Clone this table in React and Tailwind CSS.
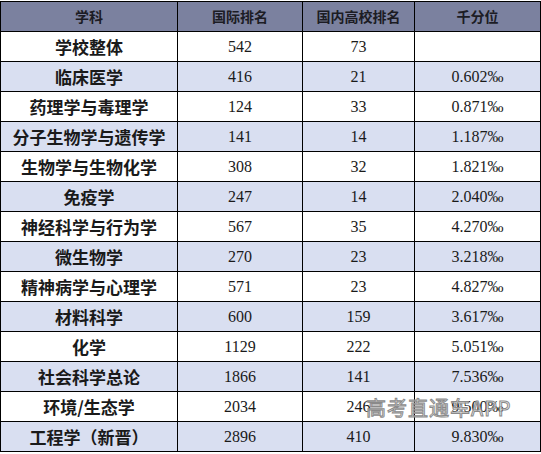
import React from "react";

const rows = [
  { name: "学校整体", intl: "542", home: "73", rate: "" },
  { name: "临床医学", intl: "416", home: "21", rate: "0.602‰" },
  { name: "药理学与毒理学", intl: "124", home: "33", rate: "0.871‰" },
  { name: "分子生物学与遗传学", intl: "141", home: "14", rate: "1.187‰" },
  { name: "生物学与生物化学", intl: "308", home: "32", rate: "1.821‰" },
  { name: "免疫学", intl: "247", home: "14", rate: "2.040‰" },
  { name: "神经科学与行为学", intl: "567", home: "35", rate: "4.270‰" },
  { name: "微生物学", intl: "270", home: "23", rate: "3.218‰" },
  { name: "精神病学与心理学", intl: "571", home: "23", rate: "4.827‰" },
  { name: "材料科学", intl: "600", home: "159", rate: "3.617‰" },
  { name: "化学", intl: "1129", home: "222", rate: "5.051‰" },
  { name: "社会科学总论", intl: "1866", home: "141", rate: "7.536‰" },
  { name: "环境/生态学", intl: "2034", home: "246", rate: "9.500‰" },
  { name: "工程学（新晋）", intl: "2896", home: "410", rate: "9.830‰" },
];

const App = () => {
  return (
    <div className="w-[541px] h-[454px] bg-white relative pt-px">
      <table className="w-[540px] border-collapse table-fixed text-[#1a1a1a]">
        <colgroup>
          <col className="w-[177px]" />
          <col className="w-[125px]" />
          <col className="w-[112px]" />
          <col className="w-[126px]" />
        </colgroup>
        <thead>
          <tr className="h-[30px] bg-[#7b819f] font-['Noto_Sans_CJK_SC',sans-serif] text-[14px] font-bold text-[#1c1c24]">
            <th className="border border-black">学科</th>
            <th className="border border-black">国际排名</th>
            <th className="border border-black">国内高校排名</th>
            <th className="border border-black">千分位</th>
          </tr>
        </thead>
        <tbody>
          {rows.map((r, i) => (
            <tr
              key={r.name}
              className={`h-[30px] ${i % 2 === 1 ? "bg-[#d9dff1]" : "bg-white"}`}
            >
              <td className="border border-black text-center font-['Noto_Sans_CJK_SC',sans-serif] text-[17px] font-bold leading-none">
                {r.name}
              </td>
              <td className="border border-black text-center font-['Liberation_Serif',serif] text-[16px] leading-none">
                {r.intl}
              </td>
              <td className="border border-black text-center font-['Liberation_Serif',serif] text-[16px] leading-none">
                {r.home}
              </td>
              <td className="border border-black text-center font-['Liberation_Serif',serif] text-[16px] leading-none">
                {r.rate}
              </td>
            </tr>
          ))}
        </tbody>
      </table>

      {/* watermark */}
      <div className="absolute left-[366px] top-[398px] font-['Noto_Sans_CJK_SC',sans-serif] text-[20px] leading-none text-white/60 [-webkit-text-stroke:1px_#8a8a8a] tracking-[1px]">
        高考直通车APP
      </div>
    </div>
  );
};

export default App;
